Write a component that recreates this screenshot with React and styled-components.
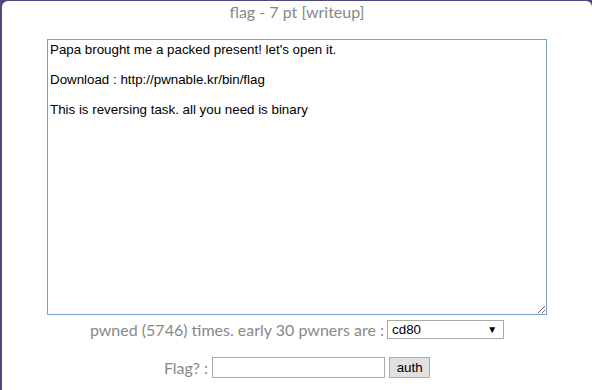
import React from 'react';
import styled, { createGlobalStyle } from 'styled-components';

const GlobalStyle = createGlobalStyle`
  html, body {
    margin: 0;
    padding: 0;
    height: 100%;
    background: #4e4a7c;
  }
  #root {
    height: 100%;
  }
`;

const challenge = {
  name: 'flag',
  points: 7,
  description:
    "Papa brought me a packed present! let's open it.\n\nDownload : http://pwnable.kr/bin/flag\n\nThis is reversing task. all you need is binary",
  pwned: 5746,
  early: 30,
  pwners: ['cd80'],
};

function App() {
  return (
    <Page>
      <GlobalStyle />
      <Panel>
        <Title>
          {challenge.name} - {challenge.points} pt [writeup]
        </Title>
        <Description defaultValue={challenge.description} autoFocus />
        <Stats>
          pwned ({challenge.pwned}) times. early {challenge.early} pwners are :
          <SelectWrap>
            <Select defaultValue={challenge.pwners[0]}>
              {challenge.pwners.map((p) => (
                <option key={p}>{p}</option>
              ))}
            </Select>
          </SelectWrap>
        </Stats>
        <AuthForm onSubmit={(e) => e.preventDefault()}>
          Flag? :
          <FlagInput type='text' />
          <AuthButton type='submit'>auth</AuthButton>
        </AuthForm>
      </Panel>
    </Page>
  );
}

export default App;

const Page = styled.div`
  height: 100%;
  box-sizing: border-box;
  padding: 1px 0 0 2px;
  display: flex;
`;

const Panel = styled.div`
  flex: 1;
  background: #ffffff;
  border-radius: 6px 6px 0 0;
  display: flex;
  flex-direction: column;
  align-items: center;
  font-family: Lato, 'Open Sans', sans-serif;
  color: #888888;
  font-size: 16px;
`;

const Title = styled.div`
  height: 22px;
  line-height: 22px;
  margin-bottom: 16px;
`;

const Description = styled.textarea`
  width: 500px;
  height: 276px;
  box-sizing: border-box;
  margin: 0;
  padding: 2px;
  border: 1px solid #7d9fd8;
  outline: none;
  font-family: 'Liberation Sans', Arial, sans-serif;
  font-size: 13.333px;
  line-height: 15px;
  color: #000000;
  background: #ffffff;
`;

const Stats = styled.div`
  display: flex;
  align-items: center;
  gap: 3px;
  margin-top: 4px;
  height: 20px;
`;

const SelectWrap = styled.span`
  position: relative;
  display: inline-flex;

  &::after {
    content: '▼';
    position: absolute;
    right: 7px;
    top: 3px;
    font-size: 10px;
    color: #000000;
    pointer-events: none;
  }
`;

const Select = styled.select`
  appearance: none;
  width: 117px;
  height: 19px;
  box-sizing: border-box;
  padding: 0 4px;
  border: 1px solid #a9a9a9;
  border-radius: 0;
  background: #ffffff;
  font-family: 'Liberation Sans', Arial, sans-serif;
  font-size: 13.333px;
  color: #000000;
  outline: none;
`;

const AuthForm = styled.form`
  display: flex;
  align-items: center;
  gap: 4px;
  margin: 18px 0 0;
  height: 21px;
`;

const FlagInput = styled.input`
  width: 173px;
  height: 21px;
  box-sizing: border-box;
  margin: 0;
  padding: 1px 2px;
  border: 1px solid #a9a9a9;
  border-radius: 0;
  font-family: 'Liberation Sans', Arial, sans-serif;
  font-size: 13.333px;
  outline: none;
`;

const AuthButton = styled.button`
  width: 41px;
  height: 21px;
  padding: 0;
  margin: 0;
  box-sizing: border-box;
  border: 1px solid #adadad;
  border-radius: 0;
  background: #e1e1e1;
  font-family: 'Liberation Sans', Arial, sans-serif;
  font-size: 13.333px;
  color: #000000;
`;
